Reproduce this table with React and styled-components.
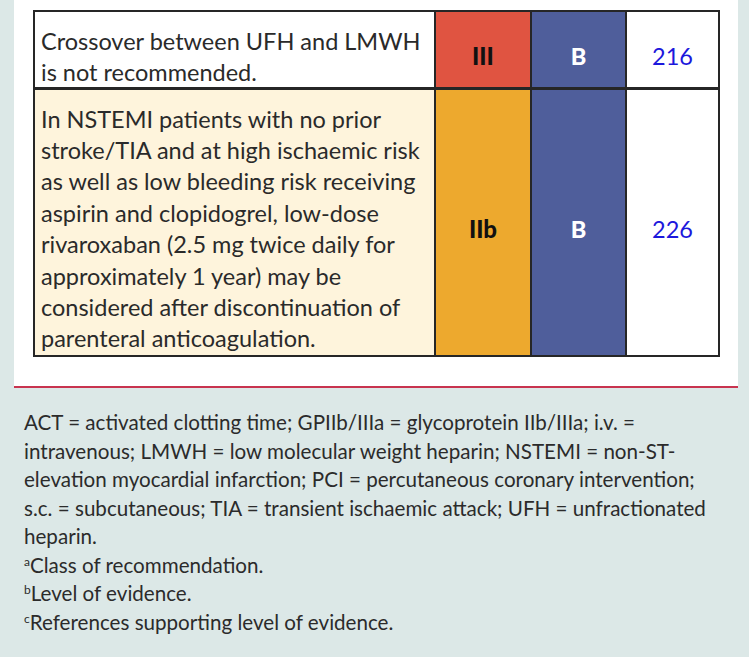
import React from 'react';
import styled, { createGlobalStyle } from 'styled-components';

const GlobalStyle = createGlobalStyle`
  html, body {
    margin: 0;
    padding: 0;
    background: #fff;
  }
  body {
    font-family: Lato, "Open Sans", sans-serif;
    color: #2b2b2b;
  }
`;

const rows = [
    {
        text: ['Crossover between UFH and LMWH', 'is not recommended.'],
        cls: 'III',
        level: 'B',
        ref: '216',
        tint: '#ffffff',
        clsColor: '#e05441',
        height: 77,
    },
    {
        text: [
            'In NSTEMI patients with no prior',
            'stroke/TIA and at high ischaemic risk',
            'as well as low bleeding risk receiving',
            'aspirin and clopidogrel, low-dose',
            'rivaroxaban (2.5 mg twice daily for',
            'approximately 1 year) may be',
            'considered after discontinuation of',
            'parenteral anticoagulation.',
        ],
        cls: 'IIb',
        level: 'B',
        ref: '226',
        tint: '#fef4dc',
        clsColor: '#eda92e',
        height: 268,
    },
];

const footLines = [
    'ACT = activated clotting time; GPIIb/IIIa = glycoprotein IIb/IIIa; i.v. =',
    'intravenous; LMWH = low molecular weight heparin; NSTEMI = non-ST-',
    'elevation myocardial infarction; PCI = percutaneous coronary intervention;',
    's.c. = subcutaneous; TIA = transient ischaemic attack; UFH = unfractionated',
    'heparin.',
];

const notes = [
    ['a', 'Class of recommendation.'],
    ['b', 'Level of evidence.'],
    ['c', 'References supporting level of evidence.'],
];

function App() {
    return (
        <Page>
            <GlobalStyle />
            <Panel>
                <Table>
                    <colgroup>
                        <col style={{ width: 401 }} />
                        <col style={{ width: 96 }} />
                        <col style={{ width: 95 }} />
                        <col style={{ width: 93 }} />
                    </colgroup>
                    <tbody>
                        {rows.map((r, i) => (
                            <Row key={i} $h={r.height} $first={i === 0}>
                                <TextCell $bg={r.tint}>
                                    <Lines>
                                        {r.text.map((l, j) => (
                                            <Line key={j}>{l}</Line>
                                        ))}
                                    </Lines>
                                </TextCell>
                                <ClassCell $bg={r.clsColor}>{r.cls}</ClassCell>
                                <LevelCell>{r.level}</LevelCell>
                                <RefCell>{r.ref}</RefCell>
                            </Row>
                        ))}
                    </tbody>
                </Table>
            </Panel>
            <Footer>
                {footLines.map((l, i) => (
                    <FootLine key={i}>{l}</FootLine>
                ))}
                {notes.map(([m, t]) => (
                    <FootLine key={m}>
                        <Sup>{m}</Sup>
                        {t}
                    </FootLine>
                ))}
            </Footer>
        </Page>
    );
}

const Page = styled.div`
  background: #dce8e7;
  padding: 0 11px 0 14px;
  height: 657px;
  box-sizing: border-box;
`;

const Panel = styled.div`
  background: #fff;
  padding: 10px 20px 29px 19px;
  border-bottom: 2px solid #c8344f;
`;

const Table = styled.table`
  border-collapse: collapse;
  table-layout: fixed;
  width: 685px;
  font-size: 23.5px;
`;

const Row = styled.tr`
  height: ${(p) => p.$h}px;

  td {
    border: 2px solid #262626;
    border-bottom-width: ${(p) => (p.$first ? 3 : 2)}px;
    vertical-align: middle;
    padding: 13px 0 0;
    overflow: visible;
  }
`;

const TextCell = styled.td`
  background: ${(p) => p.$bg};
  && {
    vertical-align: top;
    padding: 14px 0 0 6px;
  }
  line-height: 31.4px;
  color: #2a2a2a;
`;

const Lines = styled.div`
  margin-bottom: -6px;
`;

const Line = styled.div`
  white-space: nowrap;
`;

const ClassCell = styled.td`
  background: ${(p) => p.$bg};
  text-align: center;
  font-weight: 900;
  font-size: 24px;
  color: #111;
`;

const LevelCell = styled.td`
  background: #4f5e9b;
  text-align: center;
  font-weight: 900;
  color: #fff;
`;

const RefCell = styled.td`
  background: #fff;
  text-align: center;
  color: #1c18dc;
`;

const Footer = styled.div`
  padding: 20px 0 0 10px;
  font-size: 20.6px;
  line-height: 28.5px;
  color: #2b2b2b;
`;

const FootLine = styled.div`
  white-space: nowrap;
`;

const Sup = styled.span`
  font-size: 12px;
  vertical-align: 7px;
  line-height: 0;
`;

export default App;
